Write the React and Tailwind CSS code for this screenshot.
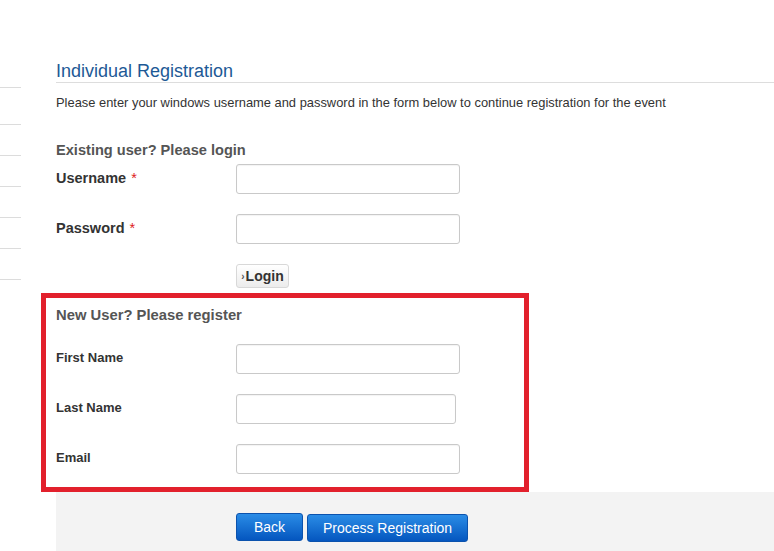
import React from 'react'

const Field = ({ label, required, big, inputW = 'w-[224px]' }) => {
  return (
    <div className="flex items-center h-[30px]">
      <label className={`w-[180px] font-bold text-[#333] ${big ? 'text-[14.5px]' : 'text-[13px] -mt-[2px]'}`}>
        {label}
        {required && <span className="text-[#d22] font-normal ml-[5px]">*</span>}
      </label>
      <input type="text" className={`${inputW} h-[30px] bg-white border border-[#c9c9c9] rounded-[3px] shadow-[inset_0_1px_1px_rgba(0,0,0,0.05)] outline-none`} />
    </div>
  )
}

const BlueButton = ({ label, className }) => {
  return (
    <button className={`h-[28px] px-[13px] pt-[1px] text-white text-[14px] rounded-[3px] border border-[#0b52ad] bg-gradient-to-b from-[#2a8ce6] to-[#0556bf] ${className}`}>
      {label}
    </button>
  )
}

export default function App() {
  const sideRows = ['h-[88px]', 'h-[37px]', 'h-[31px]', 'h-[31px]', 'h-[31px]', 'h-[31px]', 'h-[31px]']

  return (
    <div className="flex w-[774px] h-[551px] overflow-hidden bg-white" style={{ fontFamily: '"Liberation Sans", Arial, sans-serif' }}>
      {/* 왼쪽 메뉴 라인 */}
      <div className="w-[56px] shrink-0">
        <div className="w-[21px] flex flex-col">
          {sideRows.map((h, i) => (
            <div key={i} className={`${h} border-b border-[#dcdcdc]`} />
          ))}
        </div>
      </div>

      <div className="flex-1 pt-[61px]">
        <h2 className="text-[18px] leading-[21px] text-[#1d5996] border-b border-[#dddddd]">Individual Registration</h2>
        <p className="mt-[11px] text-[12.9px] leading-[17px] text-[#333]">
          Please enter your windows username and password in the form below to continue registration for the event
        </p>

        {/* 기존 사용자 */}
        <h3 className="mt-[30px] text-[14.6px] leading-[18px] font-bold text-[#555]">Existing user? Please login</h3>
        <div className="mt-[5px] flex flex-col gap-[20px]">
          <Field label="Username" required big />
          <Field label="Password" required big />
          <div className="pl-[180px]">
            <button className="h-[24px] w-[53px] flex items-center justify-center border border-[#d8d8d8] rounded-[3px] bg-gradient-to-b from-[#ffffff] to-[#ececec] text-[14px] font-bold text-[#333]">
              <span className="text-[10px] text-[#555] mr-[1px]">›</span>Login
            </button>
          </div>
        </div>

        {/* 신규 사용자 */}
        <div className="mt-[5px] -ml-[15px] w-[488px] border-[5px] border-[#e2202c] pl-[10px] pt-[9px] pb-[13px]">
          <h3 className="text-[14.8px] leading-[17px] font-bold text-[#555]">New User? Please register</h3>
          <div className="mt-[20px] flex flex-col gap-[20px]">
            <Field label="First Name" />
            <Field label="Last Name" inputW="w-[220px]" />
            <Field label="Email" />
          </div>
        </div>

        <div className="bg-[#f3f3f3] h-[80px] pt-[21px] pl-[180px] flex gap-[4px] items-start">
          <BlueButton label="Back" className="w-[67px]" />
          <BlueButton label="Process Registration" className="w-[161px] mt-[1px] h-[26px]" />
        </div>
      </div>
    </div>
  )
}
